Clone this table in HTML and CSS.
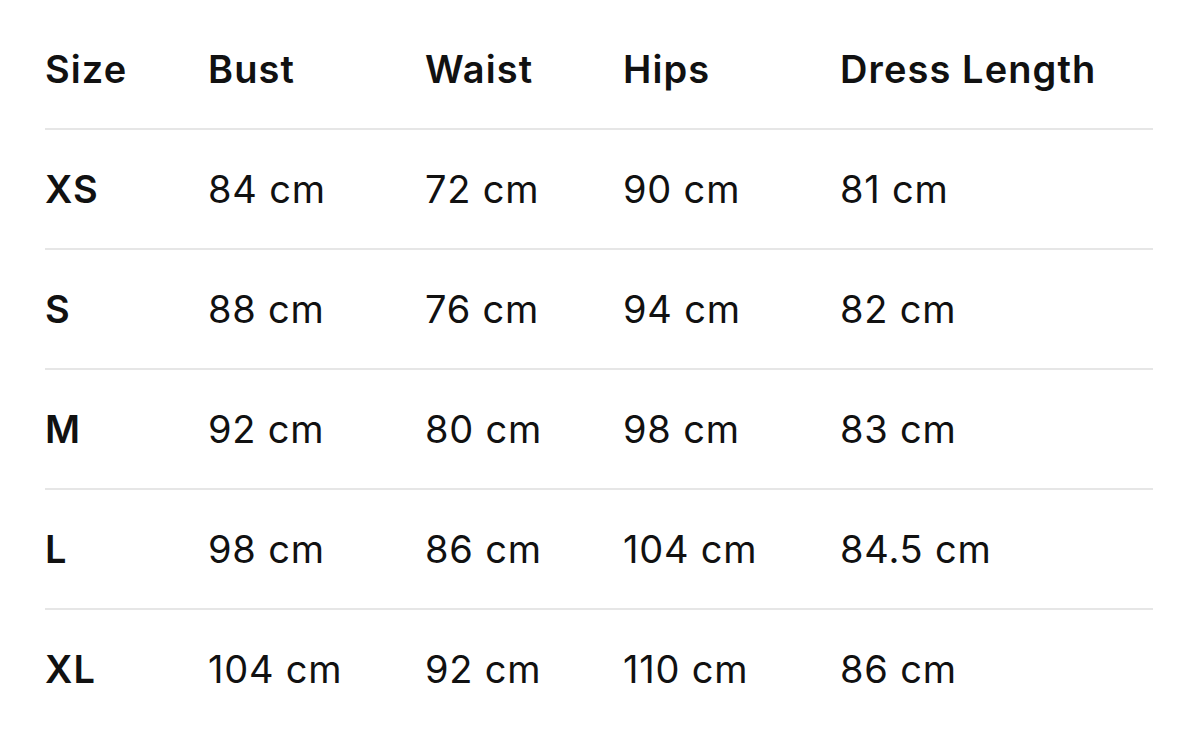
FILE: index.html
```html
<!DOCTYPE html>
<html>
<head>
<meta charset="utf-8">
<link rel="stylesheet" href="styles.css">
</head>
<body>
<table class="size-table">
  <colgroup>
    <col class="c1"><col class="c2"><col class="c3"><col class="c4"><col class="c5">
  </colgroup>
  <thead>
    <tr><th>Size</th><th>Bust</th><th>Waist</th><th>Hips</th><th>Dress Length</th></tr>
  </thead>
  <tbody>
    <tr><th>XS</th><td>84 cm</td><td>72 cm</td><td>90 cm</td><td>81 cm</td></tr>
    <tr><th>S</th><td>88 cm</td><td>76 cm</td><td>94 cm</td><td>82 cm</td></tr>
    <tr><th>M</th><td>92 cm</td><td>80 cm</td><td>98 cm</td><td>83 cm</td></tr>
    <tr><th>L</th><td>98 cm</td><td>86 cm</td><td>104 cm</td><td>84.5 cm</td></tr>
    <tr><th>XL</th><td>104 cm</td><td>92 cm</td><td>110 cm</td><td>86 cm</td></tr>
  </tbody>
</table>
</body>
</html>
```
FILE: styles.css
```css
html, body {
  margin: 0;
  padding: 0;
  background: #fff;
}
body {
  padding: 10px 47px 0 45px;
  font-family: Inter, "Noto Sans", sans-serif;
  color: #111;
}
.size-table {
  width: 1108px;
  border-collapse: collapse;
  table-layout: fixed;
}
.c1 { width: 163px; }
.c2 { width: 217px; }
.c3 { width: 198px; }
.c4 { width: 217px; }
.c5 { width: auto; }
.size-table th,
.size-table td {
  height: 118px;
  padding: 0;
  text-align: left;
  vertical-align: middle;
  font-size: 38px;
  line-height: 1;
  border-bottom: 2px solid #e6e6e6;
}
.size-table th { font-weight: 600; letter-spacing: 1.1px; }
.size-table td { font-weight: 400; letter-spacing: 0.8px; }
.size-table tbody tr:last-child th,
.size-table tbody tr:last-child td { border-bottom: none; }
```
